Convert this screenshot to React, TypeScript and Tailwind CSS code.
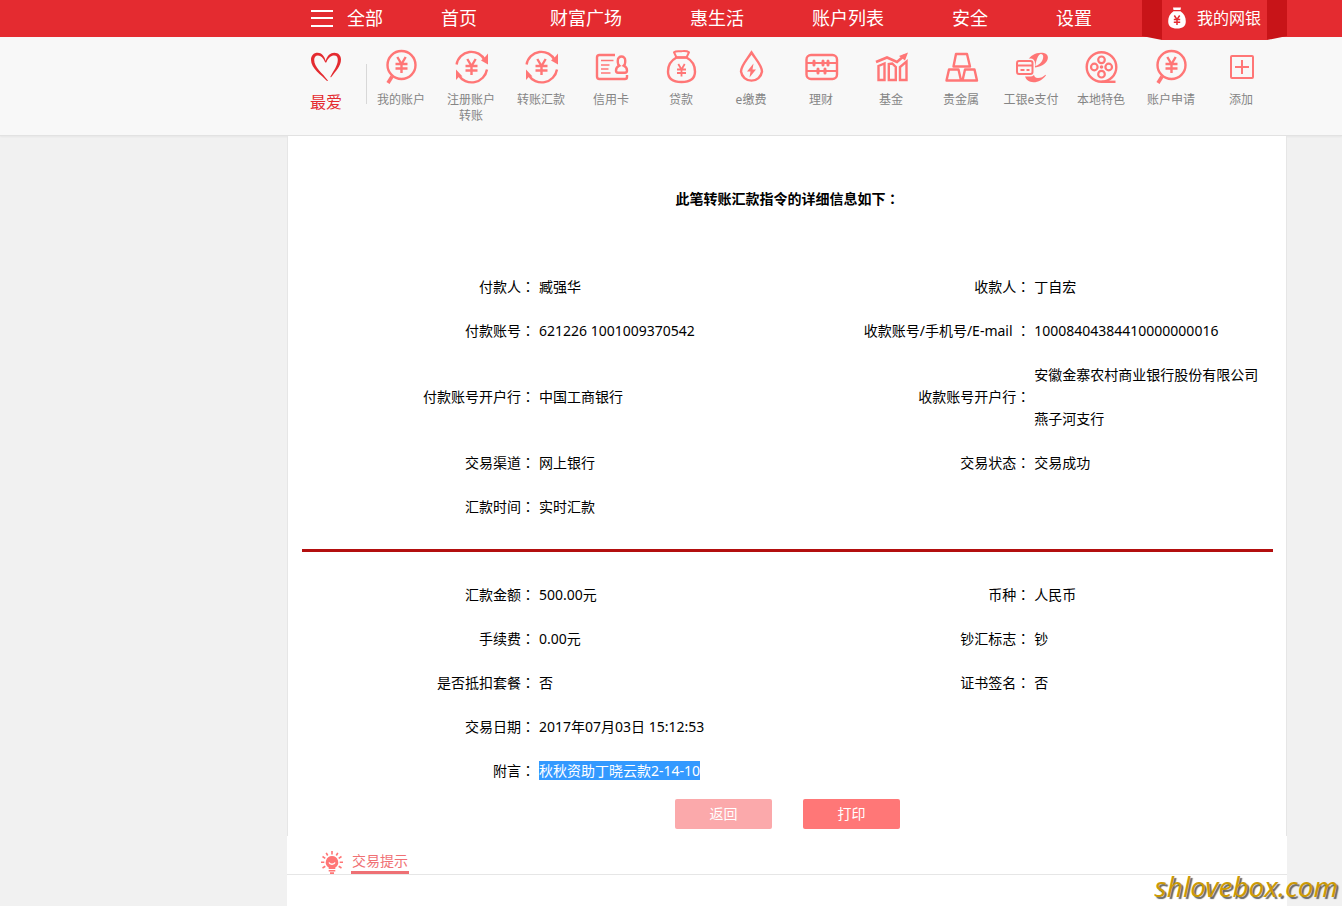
import type { ReactNode } from "react";

type Field = { label: string; value: ReactNode };
type Row = [Field, Field?];

const mainNav = ["财富广场", "惠生活", "账户列表", "安全", "设置"];

const transferRows: Row[] = [
  [{ label: "付款人", value: "臧强华" }, { label: "收款人", value: "丁自宏" }],
  [
    { label: "付款账号", value: "621226 1001009370542" },
    { label: "收款账号/手机号/E-mail ", value: "10008404384410000000016" },
  ],
  [
    { label: "付款账号开户行", value: "中国工商银行" },
    { label: "收款账号开户行", value: "安徽金寨农村商业银行股份有限公司燕子河支行" },
  ],
  [{ label: "交易渠道", value: "网上银行" }, { label: "交易状态", value: "交易成功" }],
  [{ label: "汇款时间", value: "实时汇款" }],
];

const amountRows: Row[] = [
  [{ label: "汇款金额", value: "500.00元" }, { label: "币种", value: "人民币" }],
  [{ label: "手续费", value: "0.00元" }, { label: "钞汇标志", value: "钞" }],
  [{ label: "是否抵扣套餐", value: "否" }, { label: "证书签名", value: "否" }],
  [{ label: "交易日期", value: "2017年07月03日 15:12:53" }],
  [{ label: "附言", value: <mark className="bg-[#3399ff] text-white">秋秋资助丁晓云款2-14-10</mark> }],
];

function Icon({ children }: { children: ReactNode }) {
  return (
    <svg
      viewBox="0 0 36 36"
      className="size-9 shrink-0 overflow-visible"
      fill="none"
      stroke="#ff7676"
      strokeWidth="2.4"
      aria-hidden="true"
    >
      {children}
    </svg>
  );
}

const MagnifierIcon = () => (
  <Icon>
    <circle cx="18.5" cy="16" r="14" />
    <path d="M9 27.5L5 34" strokeWidth="3.6" />
    <path d="M14.3 8l4.2 7 4.2-7M18.5 15v9M12.5 15h12M12.5 19.5h12" />
  </Icon>
);

const ExchangeIcon = () => (
  <Icon>
    <path d="M3.6 15.5A15 15 0 0 1 32 11.5" />
    <path d="M34 20.5A15.5 15.5 0 0 1 5.5 26" />
    <path d="M32.5 7.5L35 4.5V15.5L28 11.5zM3 20.5l6.5 7L6 27.8 3 31z" fill="#ff7676" stroke="none" />
    <path d="M14.3 10l4.2 7 4.2-7M18.5 17v9M12.5 17h12M12.5 21.5h12" />
  </Icon>
);

const CardIcon = () => (
  <Icon>
    <path d="M22 6H6.5A2.5 2.5 0 0 0 4 8.5V27.5A2.5 2.5 0 0 0 6.500 30H32a2 2 0 0 0 2-2v-2" />
    <path d="M8 11.5H20.5M8 16H16.5M8 20H15.5M8 24H17.5" strokeWidth="1.7" />
    <path d="M28.5 7.5a3.7 3.7 0 0 0-3.7 3.7v2c0 1.6.6 2.7 1.5 3.5-2.2 1-3.300 2.700-3.300 4.800 0 1.500.8 2.200 2 2.200h7c1.200 0 2-.7 2-2.200 0-2.100-1.100-3.800-3.300-4.800.9-.8 1.500-1.900 1.500-3.500v-2A3.700 3.700 0 0 0 28.500 7.500z" />
  </Icon>
);

const LoanIcon = () => (
  <Icon>
    <path d="M13.500 8.500L11 3.300c2.300-1.800 4.500-.8 7.500-1.100 3-.3 5.200-.7 7.500 1.100L23.500 8.500z" strokeLinejoin="round" strokeWidth="2" />
    <path d="M13.500 8.500C8 11.500 5 17 5 22.500 5 29.500 9.500 33 18.500 33s13.500-3.500 13.500-10.500c0-5.500-3-11-8.500-14z" />
    <path d="M15.300 15l3.200 5.500 3.200-5.500M18.500 20.500v7M14 20.500h9M14 24h9" strokeWidth="1.800" />
  </Icon>
);

const PaymentIcon = () => (
  <Icon>
    <path d="M18.500 3.500C14.500 10 8 16.500 8 22.500a10.600 10.600 0 0 0 21 0C29 16.500 22.500 10 18.500 3.500z" />
    <path d="M20.500 14.500l-6.500 8h3.500L16.500 28.500l6.500-8H19.500z" fill="#ff7676" stroke="none" />
  </Icon>
);

const AbacusIcon = () => (
  <Icon>
    <rect x="3.500" y="6" width="30.500" height="24" rx="4.500" />
    <path d="M3.500 14h30.500M3.500 22h30.500" strokeWidth="1.800" />
    <path d="M11 12v4M20 12v4M25 12v4M15 20v4M22 20v4" strokeWidth="3" strokeLinecap="round" />
  </Icon>
);

const FundIcon = () => (
  <Icon>
    <path d="M5.500 31V17l6-2.500V31zM15.800 31V15l3.400-.5 3.600 3.500V31zM27 31V18l6.500-5.500V31z" strokeWidth="2.400" />
    <path d="M3 13l11-4.500 10 4.500 8-7" strokeWidth="2.600" />
    <path d="M26 7l9-3.500-3 8z" fill="#ff7676" stroke="none" />
  </Icon>
);

const MetalIcon = () => (
  <Icon>
    <path d="M13 5h11l3 12.500H10.500zM6 20.500h9.500L18 31.500H3.500zM22 20.500h9.500l2.500 11H19.500z" strokeLinejoin="round" strokeWidth="2.400" />
  </Icon>
);

const EPayIcon = () => (
  <Icon>
    <path
      d="M15 11.500C17 7 22 3.800 28 3.800c4.500 0 6.900 1.700 6.900 4.700 0 5-5.400 8.900-13 10-.9 1.700-1.200 3.500-1.200 5.200 0 3.500 1.500 5.300 4.200 5.300 3 0 5.500-1.300 7.600-3.300l.5.500c-3.500 4.800-7.500 7-12.500 7-4.500 0-7.500-2.200-8.500-6.200zM22.300 17c5-1.500 7.900-5.500 7.900-9.300 0-1.900-.9-2.700-2.300-2.700-2.400 0-4.600 5-5.600 12z"
      fill="#ff7676"
      fillRule="evenodd"
      stroke="none"
    />
    <rect x="4" y="12" width="15.500" height="13" rx="2" fill="#f8f8f8" stroke="#f8f8f8" strokeWidth="5" />
    <rect x="4" y="12" width="15.500" height="13" rx="2" strokeWidth="2" />
    <path d="M4 16.500h15.500M7.500 21h4M13.500 21h3" strokeWidth="1.800" />
  </Icon>
);

const ReelIcon = () => (
  <Icon>
    <circle cx="18.500" cy="18" r="14.800" />
    <path d="M18.500 32.800h14" />
    <g strokeWidth="2.200">
      <circle cx="18.500" cy="10.800" r="3.300" />
      <circle cx="18.500" cy="25.200" r="3.300" />
      <circle cx="11.300" cy="18" r="3.300" />
      <circle cx="25.700" cy="18" r="3.300" />
    </g>
    <circle cx="18.500" cy="18" r="1.800" fill="#ff7676" stroke="none" />
  </Icon>
);

const AddIcon = () => (
  <Icon>
    <rect x="8" y="7" width="22" height="22" rx="1" strokeWidth="2" />
    <path d="M19 11v14M12 18h14" strokeWidth="2" />
  </Icon>
);

const shortcuts = [
  { label: "我的账户", icon: <MagnifierIcon /> },
  { label: "注册账户转账", icon: <ExchangeIcon /> },
  { label: "转账汇款", icon: <ExchangeIcon /> },
  { label: "信用卡", icon: <CardIcon /> },
  { label: "贷款", icon: <LoanIcon /> },
  { label: "e缴费", icon: <PaymentIcon /> },
  { label: "理财", icon: <AbacusIcon /> },
  { label: "基金", icon: <FundIcon /> },
  { label: "贵金属", icon: <MetalIcon /> },
  { label: "工银e支付", icon: <EPayIcon /> },
  { label: "本地特色", icon: <ReelIcon /> },
  { label: "账户申请", icon: <MagnifierIcon /> },
  { label: "添加", icon: <AddIcon /> },
];

// The TC face centres the full-width colon in its cell
const Colon = () => <span className="font-['Noto_Sans_CJK_TC',sans-serif] leading-none">：</span>;

function FieldCells({ field }: { field?: Field }) {
  if (!field) return <td colSpan={2} />;
  return (
    <>
      <th scope="row" className="text-right font-normal whitespace-nowrap">
        {field.label}
        <Colon />
      </th>
      <td className="pr-2 pl-1">{field.value}</td>
    </>
  );
}

function DetailTable({ rows }: { rows: Row[] }) {
  return (
    <table className="w-full table-fixed text-sm/11">
      <colgroup>
        <col className="w-[24%]" />
        <col className="w-[27%]" />
        <col className="w-[24%]" />
        <col className="w-[25%]" />
      </colgroup>
      <tbody>
        {rows.map(([left, right]) => (
          <tr key={left.label}>
            <FieldCells field={left} />
            <FieldCells field={right} />
          </tr>
        ))}
      </tbody>
    </table>
  );
}

function TopBar() {
  return (
    <header className="relative z-10 h-[37px] bg-[#e42b30] pr-[55px] pl-[287px] text-white">
      <nav className="flex h-full items-start text-lg/9 whitespace-nowrap">
        <button type="button" className="ml-6 flex items-center gap-3.5">
          <svg viewBox="0 0 22 18" className="h-[18px] w-[22px]" stroke="#fff" strokeWidth="2" aria-hidden="true">
            <path d="M0 2h22M0 9h22M0 17h22" />
          </svg>
          全部
        </button>
        <a href="#" className="ml-[58px]">首页</a>
        <div className="ml-[73px] flex gap-[68px]">
          {mainNav.map((item) => (
            <a key={item} href="#">{item}</a>
          ))}
        </div>
        <div className="ml-auto flex h-10">
          <div className="w-5 bg-[#c81418] [clip-path:polygon(0_0,100%_0,100%_100%,0_90%)]" />
          <a href="#" className="flex h-10 w-[105px] items-center gap-[11px] bg-[#e42b30] pb-1 pl-1.5 text-base/9">
            <svg viewBox="0 0 18 22" className="h-[22px] w-[18px]" aria-hidden="true">
              <path d="M5 .5h8L12.500 3h-7zM5.500 4.200h7c3.500 2.300 5.300 6 5.300 10 0 5-3 7.300-8.800 7.300S.2 19.200.2 14.200c0-4 1.800-7.700 5.300-10z" fill="#fff" />
              <path d="M6.300 8.500L9 12.500l2.700-4M9 12.500V18M5.800 12.500h6.400M5.800 15.200h6.400" fill="none" stroke="#e42b30" strokeWidth="1.500" />
            </svg>
            我的网银
          </a>
          <div className="w-5 bg-[#c81418] [clip-path:polygon(0_0,100%_0,100%_90%,0_100%)]" />
        </div>
      </nav>
    </header>
  );
}

function ShortcutBar() {
  return (
    <nav className="flex h-[99px] border-b border-[#e2e2e2] bg-[#f8f8f8] pr-[55px] pl-[287px] shadow-xs">
      <a href="#" className="flex w-[78px] shrink-0 flex-col items-center pt-[15px] text-base/6 text-[#e42b30]">
        <svg viewBox="0 0 30 30" className="mb-2 size-[30px]" fill="#e42b30" aria-hidden="true">
          <path d="M14.700 9C16 3.500 19.500.7 23.300.7 27.500.7 30 3.500 30 7.500c0 6.500-5.500 12-9.700 17.500-.4.500-1.200.1-.8-.5C22.500 19 26.800 13.500 26.800 7.800c0-2.800-1.300-4.300-3.600-4.300-3.300 0-6 2.500-7.700 6.500-.3.700-1.200.7-1.500 0C12.300 6 10 3.500 7 3.500 4.500 3.500 3.200 5.300 3.200 8c0 7.500 8.300 13 13.500 20.300.4.700-.2 1.100-.7.600C10.500 23 0 16.500 0 8 0 3.500 2.700.8 6.700.8 10.500.8 13.500 4 14.700 9z" />
        </svg>
        最爱
      </a>
      <div className="mt-[27px] -mr-px ml-px h-10 w-px shrink-0 bg-[#d8d8d8]" />
      {shortcuts.map(({ label, icon }) => (
        <a
          key={label}
          href="#"
          className="flex w-[70px] shrink-0 flex-col items-center gap-[7px] px-1.5 pt-3 text-center text-xs/4 text-[#858585]"
        >
          {icon}
          {label}
        </a>
      ))}
    </nav>
  );
}

function BulbIcon() {
  return (
    <svg viewBox="0 0 22 23" className="h-[23px] w-[22px]" aria-hidden="true">
      <path
        d="M11 0v3.500M5.200 1.800l1.500 2.700M16.800 1.800l-1.500 2.700M1.500 5.500l2.800 1.800M20.500 5.500l-2.800 1.800M0 11.200h3.300M18.700 11.200H22M1.500 17l2.800-1.700M20.500 17l-2.800-1.700"
        stroke="#ff7676"
        strokeWidth="1.600"
      />
      <path d="M11 5a6.300 6.300 0 0 0-3.300 11.600V18h6.600v-1.400A6.300 6.300 0 0 0 11 5zM7.700 19h6.600v1.400H7.700zM9 21.200h4V23H9z" fill="#ff7676" />
      <path d="M8 11.500c1 2.300 5 2.300 6 0" fill="none" stroke="#fff" strokeWidth="1.400" />
    </svg>
  );
}

export default function App() {
  return (
    <div className="relative flex min-h-screen flex-col bg-[#f1f1f1] font-['Noto_Sans','Noto_Sans_CJK_SC',sans-serif] text-black">
      <TopBar />
      <ShortcutBar />
      <div className="mr-[55px] ml-[287px] flex flex-1 flex-col bg-white">
        <main className="border-x border-[#e6e6e6] pr-[13px] pb-[7px] pl-3.5">
          <h1 className="mt-[41px] mb-11 text-center text-sm/11 font-bold">
            此笔转账汇款指令的详细信息如下
            <Colon />
          </h1>
          <DetailTable rows={transferRows} />
          <hr className="mt-5 mb-[21px] border-t-3 border-[#b30f0f]" />
          <DetailTable rows={amountRows} />
          <div className="mt-1.5 flex justify-center gap-[31px] text-sm text-white">
            <button type="button" className="h-[30px] w-[97px] rounded-xs bg-[#fba9ab]">返回</button>
            <button type="button" className="h-[30px] w-[97px] rounded-xs bg-[#ff7777]">打印</button>
          </div>
        </main>
        <section className="flex h-[39px] items-end gap-2 border-b border-[#e6e6e6] pl-[34px]">
          <BulbIcon />
          <h2 className="border-b-3 border-[#ee7074] px-px text-sm/5 text-[#f07074]">交易提示</h2>
        </section>
      </div>
      <span className="absolute right-1 bottom-0 text-[28px]/10 text-[#cc9a06] italic [text-shadow:2px_2px_1px_#666]">
        shlovebox.com
      </span>
    </div>
  );
}
